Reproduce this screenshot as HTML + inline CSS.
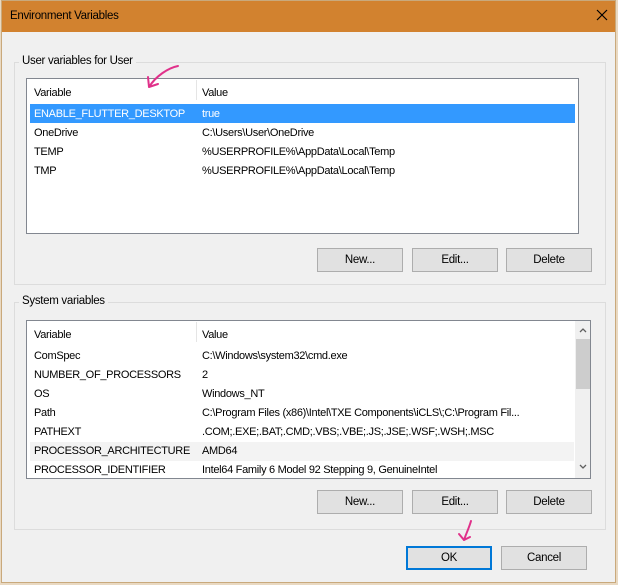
<!DOCTYPE html>
<html><head><style>
*{box-sizing:border-box;margin:0;padding:0}
body{width:618px;height:585px;background:#e9d9c2;font-family:"Liberation Sans",sans-serif;font-size:11px;letter-spacing:-0.3px;color:#000;position:relative;overflow:hidden}
.win{position:absolute;left:1px;top:0;width:615px;height:583px;background:#f0f0f0;border:1px solid #c9a97c}
.title{position:absolute;left:0;top:0;width:100%;height:31px;background:#d2822f}
.title span{position:absolute;left:8px;top:9px;font-size:11.5px}
.grp{position:absolute;border:1px solid #dcdcdc}
.lbl{position:absolute;background:#f0f0f0;padding:0 3px;font-size:11.5px}
.list{position:absolute;background:#fff;border:1px solid #828790;overflow:hidden}
.t{position:absolute;white-space:nowrap;margin-top:1px}
.hdiv{position:absolute;width:1px;background:#e5e5e5;height:20px}
.btn{position:absolute;width:86px;height:24px;background:#e1e1e1;border:1px solid #adadad;text-align:center;line-height:23px;font-size:11.5px}
.sel{position:absolute;background:#3399ff}
</style></head><body>
<div class="win">
<div class="title"><span>Environment Variables</span>
<svg style="position:absolute;left:594px;top:8px" width="12" height="12"><path d="M1 1L11 11M11 1L1 11" stroke="#000" stroke-width="1.2"/></svg></div>
</div>
<div class="grp" style="left:14px;top:62px;width:592px;height:223px"></div>
<div class="lbl" style="left:19px;top:55px">User variables for User</div>
<div class="list" style="left:26px;top:78px;width:553px;height:156px">
<div class="hdiv" style="left:169px;top:1px"></div>
<div class="t" style="left:7px;top:7px">Variable</div><div class="t" style="left:175px;top:7px">Value</div>
<div class="sel" style="left:3px;top:25px;width:545px;height:19px"></div>
<div class="t" style="left:7px;top:28px;color:#fff">ENABLE_FLUTTER_DESKTOP</div><div class="t" style="left:175px;top:28px;color:#fff">true</div>
<div class="t" style="left:7px;top:47px">OneDrive</div><div class="t" style="left:175px;top:47px">C:\Users\User\OneDrive</div>
<div class="t" style="left:7px;top:66px">TEMP</div><div class="t" style="left:175px;top:66px">%USERPROFILE%\AppData\Local\Temp</div>
<div class="t" style="left:7px;top:85px">TMP</div><div class="t" style="left:175px;top:85px">%USERPROFILE%\AppData\Local\Temp</div>
</div>
<svg style="position:absolute;left:140px;top:62px" width="45" height="32"><path d="M38 4 C28 6 16 14 9 25 M9 25 L8 15 M9 25 L18 22" stroke="#e0318a" stroke-width="2" fill="none" stroke-linecap="round"/></svg>
<div class="btn" style="left:317px;top:248px">New...</div>
<div class="btn" style="left:412px;top:248px">Edit...</div>
<div class="btn" style="left:506px;top:248px">Delete</div>
<div class="grp" style="left:14px;top:302px;width:592px;height:228px"></div>
<div class="lbl" style="left:19px;top:295px">System variables</div>
<div class="list" style="left:26px;top:320px;width:565px;height:159px">
<div class="hdiv" style="left:169px;top:1px"></div>
<div class="t" style="left:7px;top:7px">Variable</div><div class="t" style="left:175px;top:7px">Value</div>
<div class="t" style="left:7px;top:28px">ComSpec</div><div class="t" style="left:175px;top:28px">C:\Windows\system32\cmd.exe</div>
<div class="t" style="left:7px;top:47px">NUMBER_OF_PROCESSORS</div><div class="t" style="left:175px;top:47px">2</div>
<div class="t" style="left:7px;top:66px">OS</div><div class="t" style="left:175px;top:66px">Windows_NT</div>
<div class="t" style="left:7px;top:85px">Path</div><div class="t" style="left:175px;top:85px">C:\Program Files (x86)\Intel\TXE Components\iCLS\;C:\Program Fil...</div>
<div class="t" style="left:7px;top:104px">PATHEXT</div><div class="t" style="left:175px;top:104px">.COM;.EXE;.BAT;.CMD;.VBS;.VBE;.JS;.JSE;.WSF;.WSH;.MSC</div>
<div style="position:absolute;left:3px;top:121px;width:544px;height:19px;background:#f3f3f3"></div>
<div class="t" style="left:7px;top:123px">PROCESSOR_ARCHITECTURE</div><div class="t" style="left:175px;top:123px">AMD64</div>
<div class="t" style="left:7px;top:142px">PROCESSOR_IDENTIFIER</div><div class="t" style="left:175px;top:142px">Intel64 Family 6 Model 92 Stepping 9, GenuineIntel</div>
<div style="position:absolute;left:548px;top:0;width:16px;height:157px;background:#f0f0f0"></div>
<svg style="position:absolute;left:551px;top:5px" width="10" height="8"><path d="M2 6L5 3L8 6" stroke="#606060" stroke-width="1.3" fill="none"/></svg>
<div style="position:absolute;left:549px;top:18px;width:14px;height:50px;background:#cdcdcd"></div>
<svg style="position:absolute;left:551px;top:142px" width="10" height="8"><path d="M2 2L5 5L8 2" stroke="#606060" stroke-width="1.3" fill="none"/></svg>
</div>
<div class="btn" style="left:317px;top:490px">New...</div>
<div class="btn" style="left:412px;top:490px">Edit...</div>
<div class="btn" style="left:506px;top:490px">Delete</div>
<div class="btn" style="left:406px;top:546px;border:2px solid #0078d7;line-height:21px">OK</div>
<div class="btn" style="left:501px;top:546px">Cancel</div>
<svg style="position:absolute;left:455px;top:519px" width="25" height="25"><path d="M16 2 C14 9 11 15 9 21 M9 21 L4 15 M9 21 L15 18" stroke="#e0318a" stroke-width="2" fill="none" stroke-linecap="round"/></svg>
</body></html>
